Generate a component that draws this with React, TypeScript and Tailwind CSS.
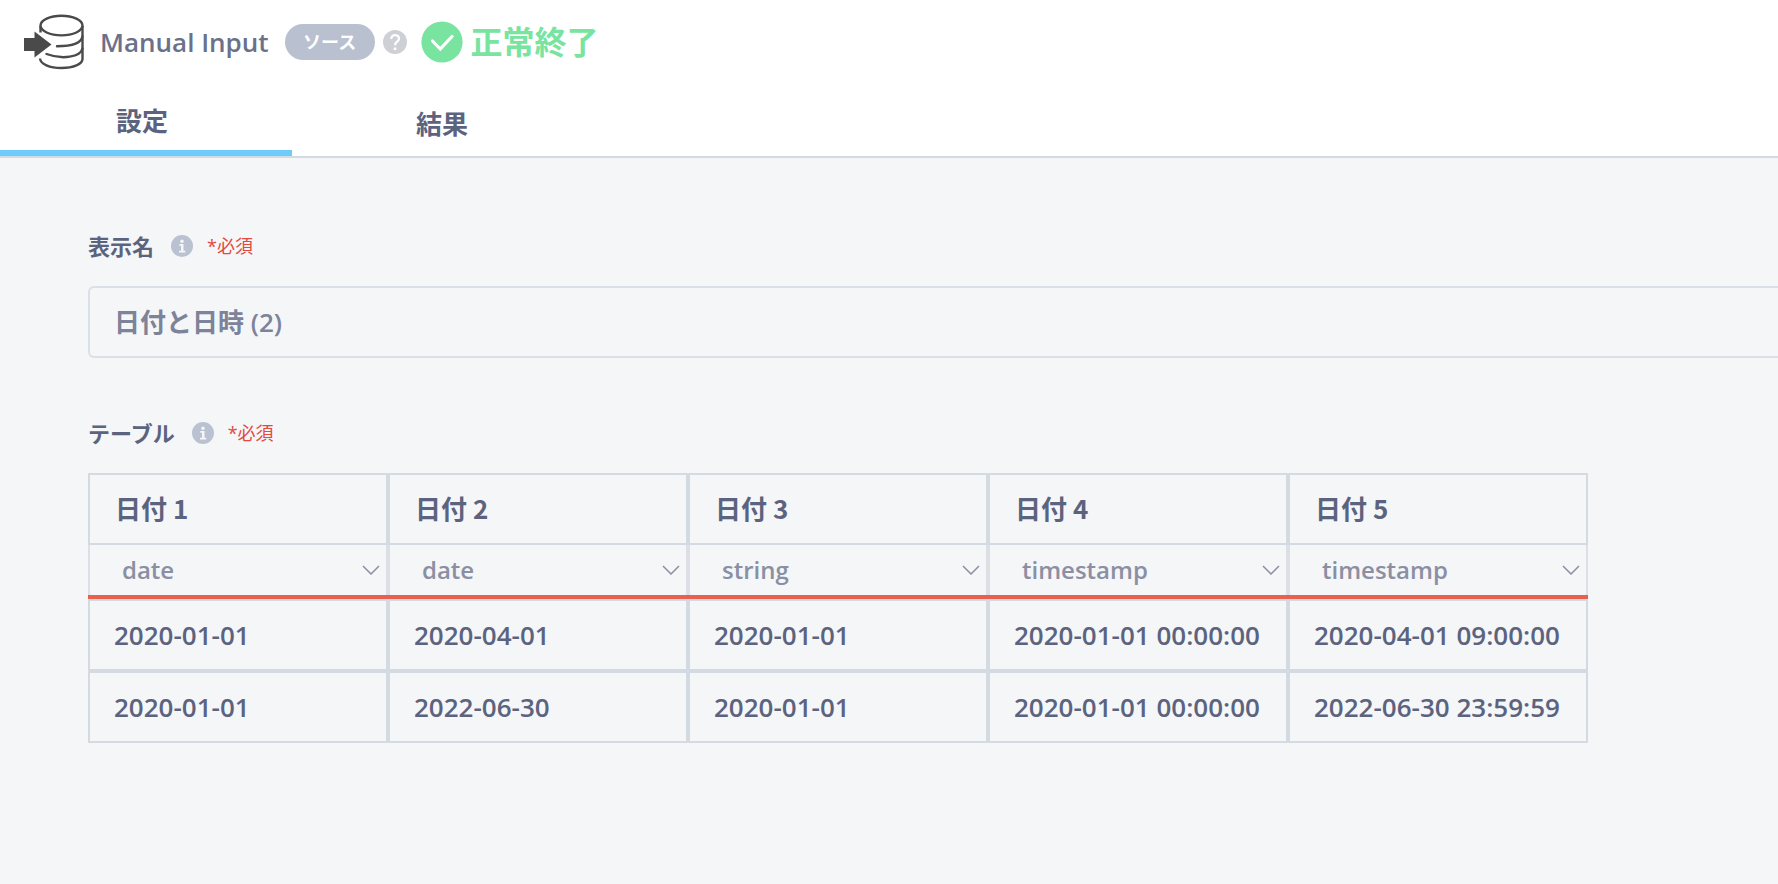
import { useState } from "react";
import clsx from "clsx";

type ColumnType = "date" | "string" | "timestamp";

interface Column {
  name: string;
  type: ColumnType;
}

const COLUMN_TYPES: ColumnType[] = ["date", "string", "timestamp"];

const TABS = [
  { id: "settings", label: "設定" },
  { id: "result", label: "結果" },
];

const initialColumns: Column[] = [
  { name: "日付 1", type: "date" },
  { name: "日付 2", type: "date" },
  { name: "日付 3", type: "string" },
  { name: "日付 4", type: "timestamp" },
  { name: "日付 5", type: "timestamp" },
];

const rows = [
  ["2020-01-01", "2020-04-01", "2020-01-01", "2020-01-01 00:00:00", "2020-04-01 09:00:00"],
  ["2020-01-01", "2022-06-30", "2020-01-01", "2020-01-01 00:00:00", "2022-06-30 23:59:59"],
];

function DatabaseInputIcon() {
  return (
    <svg className="w-[60px] h-[56px] shrink-0" viewBox="0 0 60 56" fill="none" aria-hidden="true">
      <g stroke="#4a4a4a" strokeWidth={2.4}>
        <ellipse cx="37.5" cy="11.6" rx="21" ry="9.8" />
        <path d="M16.5 12v6.500" />
        <path d="M58.5 12v33c0 5-9 9-21 9s-21-4-21.500-9.500" />
        <path d="M58.500 22.500c-1 6-10 9.700-25.500 9.700" strokeLinecap="round" />
        <path d="M58.500 34.500c-2 8.500-20 11.500-36 5.500" strokeLinecap="round" />
      </g>
      <path d="M0 24h10.500v-6.500L27.500 30.500 10.500 43.500V37H0z" fill="#4a4a4a" />
    </svg>
  );
}

function HelpIcon() {
  return (
    <svg className="w-6 h-6" viewBox="0 0 24 24" fill="none" aria-hidden="true">
      <circle cx="12" cy="12" r="12" fill="#cfd0d5" />
      <path d="M8.200 9c0-2.300 1.500-3.900 3.800-3.900S16 6.500 16 8.700c0 2.900-4 3.100-4 6.500" stroke="#fff" strokeWidth={2.2} />
      <circle cx="12" cy="18.800" r="1.500" fill="#fff" />
    </svg>
  );
}

function CheckCircleIcon() {
  return (
    <svg className="w-[42px] h-[42px]" viewBox="0 0 42 42" fill="none" aria-hidden="true">
      <circle cx="21" cy="21" r="20.600" fill="#79e3a0" />
      <path d="M11.500 20l7.800 8L31 15.500" stroke="#fff" strokeWidth={3.2} strokeLinecap="round" />
    </svg>
  );
}

function InfoIcon() {
  return (
    <svg className="w-[22px] h-[22px]" viewBox="0 0 22 22" aria-hidden="true">
      <circle cx="11" cy="11" r="11" fill="#bac2d1" />
      <circle cx="11" cy="6.300" r="1.700" fill="#f4f6f8" />
      <path d="M8.300 9h4.200v6.800h1.800v1.700H8v-1.700h2v-5H8.300z" fill="#f4f6f8" />
    </svg>
  );
}

function FieldLabel({ id, htmlFor, children }: { id: string; htmlFor?: string; children: string }) {
  const text = "text-[22px] leading-8 font-semibold text-[#5c637e]";
  return (
    <div className="flex items-center h-8">
      {htmlFor ? (
        <label id={id} htmlFor={htmlFor} className={text}>{children}</label>
      ) : (
        <span id={id} className={text}>{children}</span>
      )}
      <button type="button" className="ml-[17px] mr-3.5" aria-label="説明">
        <InfoIcon />
      </button>
      <span className="text-lg leading-8 text-[#e5483f]">*必須</span>
    </div>
  );
}

export default function App() {
  const [activeTab, setActiveTab] = useState("settings");
  const [displayName, setDisplayName] = useState("日付と日時 (2)");
  const [columns, setColumns] = useState(initialColumns);

  const setType = (idx: number, type: ColumnType) => {
    setColumns(columns.map((col, i) => (i === idx ? { ...col, type } : col)));
  };

  return (
    <div className="min-h-screen flex flex-col overflow-x-hidden bg-[#f4f6f8] font-['Open_Sans','Noto_Sans_CJK_JP',sans-serif] text-[#5c637e]">
      <header className="bg-white border-b-2 border-[#d3dae2]">
        <div className="flex items-center h-[84px] mb-2 pl-6">
          <DatabaseInputIcon />
          <h1 className="ml-4 text-[26px] leading-9 font-semibold text-[#6a7189] whitespace-nowrap">Manual Input</h1>
          <span className="ml-4 w-[90px] h-9 shrink-0 rounded-full bg-[#b9c1d0] text-white text-lg leading-9 font-bold text-center">
            ソース
          </span>
          <button type="button" className="ml-2" aria-label="ヘルプ">
            <HelpIcon />
          </button>
          <div className="ml-3.5 flex items-center gap-2 whitespace-nowrap">
            <CheckCircleIcon />
            <span className="text-[32px] leading-10 font-semibold text-[#79e3a0]">正常終了</span>
          </div>
        </div>
        <nav className="flex h-16 -ml-2" role="tablist">
          {TABS.map((tab) => (
            <button
              key={tab.id}
              type="button"
              role="tab"
              aria-selected={activeTab === tab.id}
              onClick={() => setActiveTab(tab.id)}
              className={clsx(
                "w-[300px] text-[26px] font-semibold",
                activeTab === tab.id && "border-b-6 border-[#6ecbfa]"
              )}
            >
              {tab.label}
            </button>
          ))}
        </nav>
      </header>

      <main className="flex-1 pt-[72px] pb-20 pl-[88px]">
        <FieldLabel id="name-label" htmlFor="display-name">表示名</FieldLabel>
        <input
          id="display-name"
          type="text"
          value={displayName}
          onChange={(e) => setDisplayName(e.target.value)}
          className="block mt-6 w-full h-[72px] px-6 pb-0.5 rounded-l-md border-2 border-r-0 border-[#dae0e7] bg-transparent text-[26px] font-semibold text-[#7d8399] outline-none"
        />

        <div className="mt-[59px]">
          <FieldLabel id="table-label">テーブル</FieldLabel>
        </div>
        <table
          aria-labelledby="table-label"
          className="mt-6 w-[1500px] table-fixed border-separate border-spacing-0 text-[26px] font-semibold text-left"
        >
          <thead>
            <tr>
              {columns.map((col) => (
                <th
                  key={col.name}
                  scope="col"
                  className="h-[72px] px-[25px] pb-1 border-2 border-[#d3dae2] font-semibold font-['Noto_Sans_CJK_JP',sans-serif]"
                >
                  {col.name}
                </th>
              ))}
            </tr>
            <tr>
              {columns.map((col, idx) => (
                <td key={col.name} className="p-0 border-b-4 border-[#e9604f]">
                  <div className="relative h-[50px] border-x-2 border-[#dddfe7]">
                    <select
                      aria-label={`${col.name} の型`}
                      value={col.type}
                      onChange={(e) => setType(idx, e.target.value as ColumnType)}
                      className="block appearance-none w-full h-full pl-8 pr-10 bg-transparent text-2xl text-[#8b8fa3] font-semibold outline-none"
                    >
                      {COLUMN_TYPES.map((type) => (
                        <option key={type} value={type}>{type}</option>
                      ))}
                    </select>
                    <svg
                      className="absolute right-1.5 top-5 w-[18px] h-[10px] pointer-events-none"
                      viewBox="0 0 18 10"
                      fill="none"
                      stroke="#8b8fa3"
                      strokeWidth={1.5}
                      aria-hidden="true"
                    >
                      <path d="M1 1l8 8 8-8" />
                    </svg>
                  </div>
                </td>
              ))}
            </tr>
          </thead>
          <tbody>
            {rows.map((row, rowIdx) => (
              <tr key={rowIdx}>
                {row.map((value, idx) => (
                  <td key={idx} className="h-[72px] px-6 border-2 border-[#d3dae2] whitespace-nowrap">
                    {value}
                  </td>
                ))}
              </tr>
            ))}
          </tbody>
        </table>
      </main>
    </div>
  );
}
